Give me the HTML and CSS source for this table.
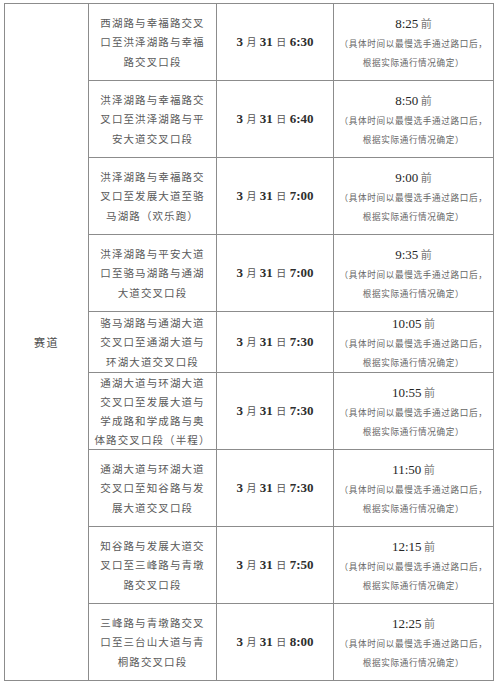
FILE: index.html
```html
<!DOCTYPE html>
<html lang="zh-CN">
<head>
<meta charset="utf-8">
<link rel="stylesheet" href="styles.css">
</head>
<body>
<div class="page">
<table class="schedule">
  <colgroup>
    <col class="c-type">
    <col class="c-route">
    <col class="c-start">
    <col class="c-end">
  </colgroup>
  <tbody>
    <tr class="row">
      <td class="type" rowspan="9">赛道</td>
      <td class="route">西湖路与幸福路交叉<br>口至洪泽湖路与幸福<br>路交叉口段</td>
      <td class="start"><span class="num">3</span> 月 <span class="num">31</span> 日 <span class="num">6:30</span></td>
      <td class="end"><div class="deadline"><span class="dnum">8:25</span> 前</div><div class="note">（具体时间以最慢选手通过路口后，<br>根据实际通行情况确定）</div></td>
    </tr>
    <tr class="row">
      <td class="route">洪泽湖路与幸福路交<br>叉口至洪泽湖路与平<br>安大道交叉口段</td>
      <td class="start"><span class="num">3</span> 月 <span class="num">31</span> 日 <span class="num">6:40</span></td>
      <td class="end"><div class="deadline"><span class="dnum">8:50</span> 前</div><div class="note">（具体时间以最慢选手通过路口后，<br>根据实际通行情况确定）</div></td>
    </tr>
    <tr class="row">
      <td class="route">洪泽湖路与幸福路交<br>叉口至发展大道至骆<br>马湖路（欢乐跑）</td>
      <td class="start"><span class="num">3</span> 月 <span class="num">31</span> 日 <span class="num">7:00</span></td>
      <td class="end"><div class="deadline"><span class="dnum">9:00</span> 前</div><div class="note">（具体时间以最慢选手通过路口后，<br>根据实际通行情况确定）</div></td>
    </tr>
    <tr class="row">
      <td class="route">洪泽湖路与平安大道<br>口至骆马湖路与通湖<br>大道交叉口段</td>
      <td class="start"><span class="num">3</span> 月 <span class="num">31</span> 日 <span class="num">7:00</span></td>
      <td class="end"><div class="deadline"><span class="dnum">9:35</span> 前</div><div class="note">（具体时间以最慢选手通过路口后，<br>根据实际通行情况确定）</div></td>
    </tr>
    <tr class="row row-short">
      <td class="route">骆马湖路与通湖大道<br>交叉口至通湖大道与<br>环湖大道交叉口段</td>
      <td class="start"><span class="num">3</span> 月 <span class="num">31</span> 日 <span class="num">7:30</span></td>
      <td class="end"><div class="deadline"><span class="dnum">10:05</span> 前</div><div class="note">（具体时间以最慢选手通过路口后，<br>根据实际通行情况确定）</div></td>
    </tr>
    <tr class="row">
      <td class="route route-tight">通湖大道与环湖大道<br>交叉口至发展大道与<br>学成路和学成路与奥<br>体路交叉口段（半程）</td>
      <td class="start"><span class="num">3</span> 月 <span class="num">31</span> 日 <span class="num">7:30</span></td>
      <td class="end"><div class="deadline"><span class="dnum">10:55</span> 前</div><div class="note">（具体时间以最慢选手通过路口后，<br>根据实际通行情况确定）</div></td>
    </tr>
    <tr class="row">
      <td class="route">通湖大道与环湖大道<br>交叉口至知谷路与发<br>展大道交叉口段</td>
      <td class="start"><span class="num">3</span> 月 <span class="num">31</span> 日 <span class="num">7:30</span></td>
      <td class="end"><div class="deadline"><span class="dnum">11:50</span> 前</div><div class="note">（具体时间以最慢选手通过路口后，<br>根据实际通行情况确定）</div></td>
    </tr>
    <tr class="row">
      <td class="route">知谷路与发展大道交<br>叉口至三峰路与青墩<br>路交叉口段</td>
      <td class="start"><span class="num">3</span> 月 <span class="num">31</span> 日 <span class="num">7:50</span></td>
      <td class="end"><div class="deadline"><span class="dnum">12:15</span> 前</div><div class="note">（具体时间以最慢选手通过路口后，<br>根据实际通行情况确定）</div></td>
    </tr>
    <tr class="row">
      <td class="route">三峰路与青墩路交叉<br>口至三台山大道与青<br>桐路交叉口段</td>
      <td class="start"><span class="num">3</span> 月 <span class="num">31</span> 日 <span class="num">8:00</span></td>
      <td class="end"><div class="deadline"><span class="dnum">12:25</span> 前</div><div class="note">（具体时间以最慢选手通过路口后，<br>根据实际通行情况确定）</div></td>
    </tr>
  </tbody>
</table>
</div>
</body>
</html>
```

FILE: styles.css
```css
html, body {
  margin: 0;
  padding: 0;
  background: #ffffff;
}

.page {
  padding: 3px 0 0 4px;
}

.schedule {
  border-collapse: collapse;
  table-layout: fixed;
  width: 489px;
  font-family: "Noto Sans CJK SC", "Noto Sans CJK JP", sans-serif;
  color: #5a5a5a;
}

.c-type { width: 84px; }
.c-route { width: 128px; }
.c-start { width: 117px; }
.c-end { width: 160px; }

.schedule td {
  border: 1px solid #8c8c8c;
  padding: 0;
  text-align: center;
  vertical-align: middle;
}

.row td { height: 76px; }
.row-short td { height: 60px; }

.type {
  font-size: 11px;
  letter-spacing: 1.5px;
  color: #4a4a4a;
}

.route {
  font-size: 10.5px;
  letter-spacing: 1.1px;
  line-height: 19.5px;
  white-space: nowrap;
}

.route-tight {
  line-height: 19px;
}

.start {
  font-size: 10px;
  word-spacing: 1.2px;
  white-space: nowrap;
  color: #555;
}

.num {
  font-family: "Liberation Serif", serif;
  font-weight: bold;
  font-size: 13px;
  word-spacing: 0;
  color: #2e2e2e;
}

.deadline {
  font-size: 11px;
  line-height: 20px;
  color: #777;
}

.dnum {
  font-family: "Liberation Serif", serif;
  font-size: 13px;
  color: #262626;
}

.note {
  font-size: 8.6px;
  letter-spacing: 0.65px;
  line-height: 19px;
  white-space: nowrap;
  color: #666;
}
```
